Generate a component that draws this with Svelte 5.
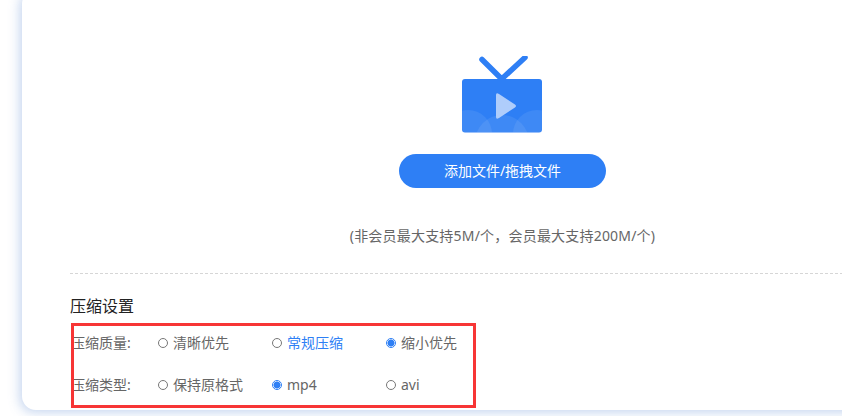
<script lang="ts">
  const groups = [
    { label: '压缩质量:', options: ['清晰优先', '常规压缩', '缩小优先'], checked: 2, hover: 1 },
    { label: '压缩类型:', options: ['保持原格式', 'mp4', 'avi'], checked: 1, hover: -1 }
  ];
</script>

<div class="page">
  <section class="card">
    <div class="upload">
      <svg class="tv" width="80" height="77" viewBox="0 0 80 77" aria-hidden="true">
        <defs>
          <clipPath id="screen"><rect x="0" y="23" width="80" height="53.5" rx="3" /></clipPath>
        </defs>
        <path d="M20 3.5 L39.7 23 L63 1.5" fill="none" stroke="#2e7ff5" stroke-width="5.5" stroke-linecap="round" stroke-linejoin="round" />
        <rect x="0" y="23" width="80" height="53.5" rx="3" fill="#2e7ff5" />
        <g clip-path="url(#screen)" fill="#fff" fill-opacity="0.08">
          <circle cx="6" cy="78" r="24" />
          <circle cx="40" cy="86" r="27" />
          <circle cx="75" cy="78" r="24" />
        </g>
        <path d="M34 39 Q34 36 37 38 L53 48.5 Q55 50 53 51.5 L37 62 Q34 64 34 61 Z" fill="#afcdfb" />
      </svg>
      <button class="add">添加文件/拖拽文件</button>
      <p class="hint">(非会员最大支持5M/个，会员最大支持200M/个)</p>
    </div>

    <div class="settings">
      <h3>压缩设置</h3>
      {#each groups as g}
        <div class="row">
          <span class="label">{g.label}</span>
          {#each g.options as opt, i}
            <label class="opt" class:hover={i === g.hover}>
              <span class="radio" class:on={i === g.checked}></span>
              {opt}
            </label>
          {/each}
        </div>
      {/each}
      <div class="mark"></div>
    </div>
  </section>
</div>

<style>
  :global(body) {
    margin: 0;
    background: #fff;
    font-family: "Noto Sans", "Noto Sans CJK SC", sans-serif;
  }

  .page {
    width: 842px;
    height: 416px;
    overflow: hidden;
    padding-left: 22px;
    box-sizing: border-box;
    background: #fff;
  }

  .card {
    width: 961px;
    height: 420px;
    margin-top: -10px;
    box-sizing: border-box;
    padding: 0 48px;
    background: #fff;
    border-radius: 14px;
    box-shadow: -2px 2px 12px rgba(110, 150, 215, 0.42);
  }

  .upload {
    display: flex;
    flex-direction: column;
    align-items: center;
    padding-top: 66px;
    height: 218px;
    background: repeating-linear-gradient(90deg, #d6d6d6 0 3px, transparent 3px 5px) bottom / 100% 1px no-repeat;
  }

  .tv {
    display: block;
    margin: 0 1px 21px 0;
  }

  .add {
    width: 207px;
    height: 34px;
    padding: 0 0 2px;
    border: 0;
    border-radius: 17px;
    background: #2e7ff5;
    color: #fff;
    font: inherit;
    font-size: 14px;
  }

  .hint {
    margin: 38px 0 0;
    font-size: 14px;
    line-height: 20px;
    letter-spacing: 0.2px;
    color: #666;
  }

  .settings {
    position: relative;
    padding-top: 21px;
  }

  h3 {
    margin: 0;
    font-size: 16px;
    font-weight: 400;
    line-height: 22px;
    color: #222;
  }

  .row {
    display: flex;
    align-items: center;
    height: 42px;
    box-sizing: border-box;
    padding-bottom: 2px;
    font-size: 14px;
    color: #666;
  }

  .row:first-of-type {
    margin-top: 5px;
  }

  .label {
    width: 88px;
    padding-left: 1px;
    box-sizing: border-box;
  }

  .opt {
    display: flex;
    align-items: center;
    gap: 5px;
    width: 114px;
  }

  .opt.hover {
    color: #2e7ff5;
  }

  .radio {
    width: 8px;
    height: 8px;
    margin-top: 2px;
    border: 1px solid #777;
    border-radius: 50%;
    background: #fff;
  }

  .radio.on {
    border-color: #2e7ff5;
    background: radial-gradient(circle, #2e7ff5 0 3.2px, #fff 3.8px);
  }

  .mark {
    position: absolute;
    left: 1px;
    top: 49px;
    width: 399px;
    height: 79px;
    border: 3px solid #f73535;
    pointer-events: none;
  }
</style>
